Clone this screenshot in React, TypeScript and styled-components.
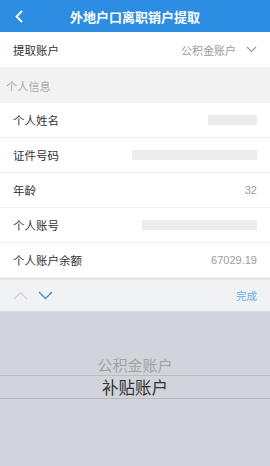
import React from 'react'
import styled, { createGlobalStyle } from 'styled-components'

const GlobalStyle = createGlobalStyle`
  html, body {
    margin: 0;
    padding: 0;
    background: #ffffff;
  }
  body {
    font-family: "Noto Sans CJK SC", "Noto Sans", sans-serif;
  }
`

const Page = styled.div`
  width: 270px;
  height: 466px;
  display: flex;
  flex-direction: column;
  overflow: hidden;
`

const Header = styled.div`
  height: 32px;
  flex-shrink: 0;
  background: #2c8de2;
  display: flex;
  align-items: center;
  justify-content: center;
  position: relative;
  color: #ffffff;
`

const BackButton = styled.div`
  position: absolute;
  left: 15px;
  top: 9px;
  width: 12px;
  height: 14px;
  display: flex;
  align-items: center;
`

const Title = styled.div`
  font-size: 13px;
  font-weight: 700;
  line-height: 1;
`

const Row = styled.div<{ $height?: number }>`
  height: ${p => p.$height ?? 35}px;
  flex-shrink: 0;
  display: flex;
  align-items: center;
  justify-content: space-between;
  padding: 0 13px;
  background: #ffffff;
  border-bottom: 1px solid #f0f0f0;
  box-sizing: border-box;
`

const Label = styled.span`
  font-size: 11.5px;
  color: #333333;
`

const Value = styled.span`
  font-size: 11px;
  color: #9b9b9b;
  display: flex;
  align-items: center;
  gap: 10px;
  font-family: "Liberation Sans", "Noto Sans CJK SC", sans-serif;
`

const Masked = styled.div<{ $width: number }>`
  width: ${p => p.$width}px;
  height: 10px;
  background: #ececec;
`

const Section = styled.div`
  height: 35px;
  flex-shrink: 0;
  background: #f2f2f2;
  display: flex;
  align-items: center;
  padding-left: 6px;
  font-size: 11.2px;
  color: #aaaaaa;
`

const Spacer = styled.div`
  flex: 1;
  background: #ffffff;
`

const Divider = styled.div`
  height: 2px;
  flex-shrink: 0;
  background: #e4e5e7;
`

const Toolbar = styled.div`
  height: 32px;
  flex-shrink: 0;
  box-sizing: border-box;
  background: #f1f2f4;
  display: flex;
  align-items: center;
  padding: 0 13px;
  gap: 10px;
  border-bottom: 1px solid #dcdde0;
`

const Done = styled.span`
  margin-left: auto;
  font-size: 10.5px;
  color: #5daee9;
`

const Picker = styled.div`
  height: 154px;
  flex-shrink: 0;
  background: #d1d4da;
  display: flex;
  flex-direction: column;
  align-items: center;
  padding-top: 43px;
  box-sizing: border-box;
`

const PickerItem = styled.div<{ $active?: boolean }>`
  font-size: ${p => (p.$active ? 16.5 : 15)}px;
  color: ${p => (p.$active ? '#333333' : '#a0a2a6')};
  height: ${p => (p.$active ? 22 : 20)}px;
  line-height: ${p => (p.$active ? 22 : 20)}px;
  width: 100%;
  text-align: center;
`

const Band = styled.div`
  width: 100%;
  border-top: 1px solid #b9bcc2;
  border-bottom: 1px solid #b9bcc2;
  display: flex;
  justify-content: center;
`

const Chevron = ({ up, color }: { up?: boolean; color: string }) => (
  <svg width="15" height="9" viewBox="0 0 15 9">
    <polyline
      points={up ? '1,8 7.5,1.5 14,8' : '1,1 7.5,7.5 14,1'}
      fill="none"
      stroke={color}
      strokeWidth="1.4"
    />
  </svg>
)

const rows: { label: string; value?: string; mask?: number }[] = [
  { label: '个人姓名', mask: 49 },
  { label: '证件号码', mask: 125 },
  { label: '年龄', value: '32' },
  { label: '个人账号', mask: 115 },
  { label: '个人账户余额', value: '67029.19' },
]

export default function App() {
  return (
    <Page>
      <GlobalStyle />
      <Header>
        <BackButton>
          <svg width="8" height="13" viewBox="0 0 8 13">
            <polyline points="7,1 1.5,6.5 7,12" fill="none" stroke="#fff" strokeWidth="1.8" />
          </svg>
        </BackButton>
        <Title>外地户口离职销户提取</Title>
      </Header>
      <Row $height={36}>
        <Label>提取账户</Label>
        <Value>
          公积金账户
          <svg width="11" height="7" viewBox="0 0 11 7">
            <polyline points="1,1 5.5,5.5 10,1" fill="none" stroke="#999" strokeWidth="1.2" />
          </svg>
        </Value>
      </Row>
      <Section>个人信息</Section>
      {rows.map(r => (
        <Row key={r.label}>
          <Label>{r.label}</Label>
          {r.mask ? <Masked $width={r.mask} /> : <Value>{r.value}</Value>}
        </Row>
      ))}
      <Spacer />
      <Divider />
      <Toolbar>
        <Chevron up color="#d0d2d6" />
        <Chevron color="#3b8ee0" />
        <Done>完成</Done>
      </Toolbar>
      <Picker>
        <PickerItem>公积金账户</PickerItem>
        <Band>
          <PickerItem $active>补贴账户</PickerItem>
        </Band>
      </Picker>
    </Page>
  )
}
